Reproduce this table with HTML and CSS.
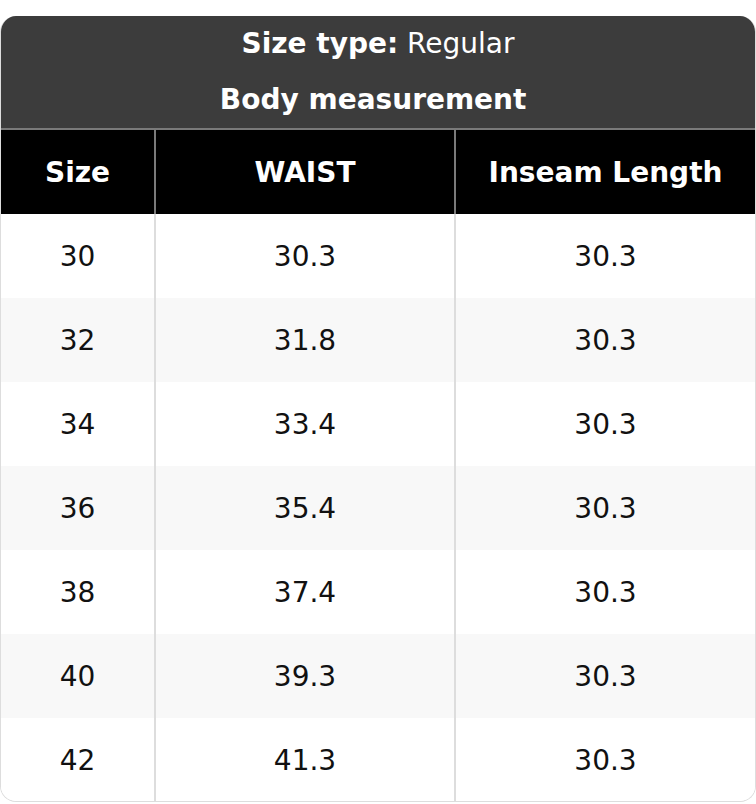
FILE: index.html
```html
<!DOCTYPE html>
<html>
<head>
<meta charset="utf-8">
<link rel="stylesheet" href="styles.css">
</head>
<body>
<div class="card">
  <div class="card-head">
    <div class="line"><b>Size type:</b> Regular</div>
    <div class="line"><b>Body measurement&nbsp;</b></div>
  </div>
  <div class="grid">
    <div class="row head"><div class="cell">Size</div><div class="cell">WAIST</div><div class="cell">Inseam Length</div></div>
    <div class="row"><div class="cell">30</div><div class="cell">30.3</div><div class="cell">30.3</div></div>
    <div class="row alt"><div class="cell">32</div><div class="cell">31.8</div><div class="cell">30.3</div></div>
    <div class="row"><div class="cell">34</div><div class="cell">33.4</div><div class="cell">30.3</div></div>
    <div class="row alt"><div class="cell">36</div><div class="cell">35.4</div><div class="cell">30.3</div></div>
    <div class="row"><div class="cell">38</div><div class="cell">37.4</div><div class="cell">30.3</div></div>
    <div class="row alt"><div class="cell">40</div><div class="cell">39.3</div><div class="cell">30.3</div></div>
    <div class="row"><div class="cell">42</div><div class="cell">41.3</div><div class="cell">30.3</div></div>
  </div>
</div>
</body>
</html>
```
FILE: styles.css
```css
html, body {
  margin: 0;
  padding: 0;
  background: #fff;
}
body {
  padding-top: 16px;
  font-family: "DejaVu Sans", sans-serif;
  font-size: 28px;
  color: #111;
}
.card {
  border: 1px solid #dddddd;
  border-top: none;
  border-radius: 16px;
  overflow: hidden;
  height: 786px;
  box-sizing: border-box;
}
.card-head {
  background: #3c3c3c;
  color: #fff;
  text-align: center;
  border-bottom: 2px solid #7a7a7a;
}
.card-head .line {
  height: 56px;
  line-height: 56px;
}
.card-head b {
  font-weight: bold;
}
.row {
  display: grid;
  grid-template-columns: 153px 300px 1fr;
  height: 84px;
  background: #fff;
}
.row.alt {
  background: #f8f8f8;
}
.cell {
  display: flex;
  align-items: center;
  justify-content: center;
}
.cell + .cell {
  border-left: 2px solid #dddddd;
}
.row.head {
  background: #000;
  color: #fff;
  font-weight: bold;
}
.row.head .cell + .cell {
  border-left-color: #7a7a7a;
}
```
